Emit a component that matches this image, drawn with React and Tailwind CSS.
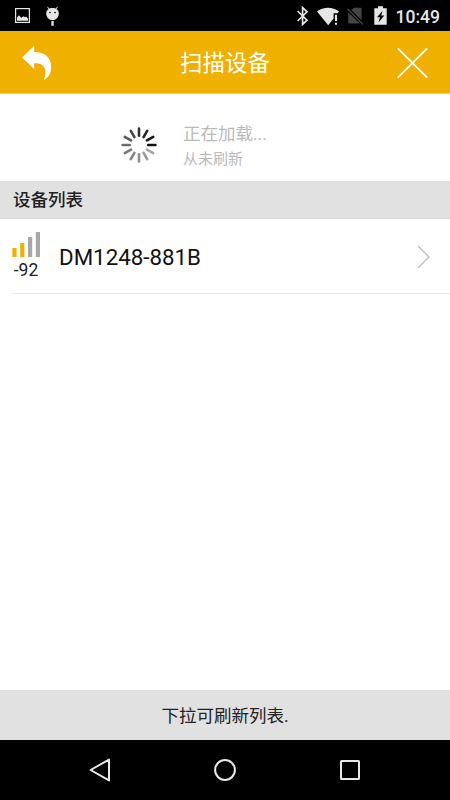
import React from "react";

/* Spinner spokes, clockwise from the top */
const SPOKES = [
  "#333333",
  "#262626",
  "#1a1a1a",
  "#101010",
  "#a8a8a8",
  "#999999",
  "#8f8f8f",
  "#858585",
  "#7a7a7a",
  "#6c6c6c",
  "#5c5c5c",
  "#484848",
];

const devices = [{ name: "DM1248-881B", rssi: -92, level: 2 }];

const Spinner = () => (
  <svg className="w-9 h-9" viewBox="-18 -18 36 36">
    {SPOKES.map((color, i) => (
      <line
        key={i}
        x1="0"
        y1="-9.2"
        x2="0"
        y2="-16.4"
        stroke={color}
        strokeWidth="2.6"
        strokeLinecap="round"
        transform={`rotate(${i * 30})`}
      />
    ))}
  </svg>
);

const Signal = ({ level }) => (
  <svg className="w-7 h-[25px]" viewBox="0 0 28 25">
    {[9, 14, 20, 25].map((h, i) => (
      <rect
        key={h}
        x={0.4 + i * 7.8}
        y={25 - h}
        width="4.2"
        height={h}
        fill={i < level ? "#efb000" : "#a8a8a8"}
      />
    ))}
  </svg>
);

const StatusBar = () => (
  <div className="h-[31px] shrink-0 bg-black text-[#e6e6e6] flex items-center justify-between pl-[15px] pr-[10px]">
    <div className="flex items-center gap-[16px]">
      <svg className="w-[15px] h-[15px]" viewBox="0 0 15 15">
        <rect x="0.6" y="0.6" width="13.8" height="13.8" fill="none" stroke="currentColor" strokeWidth="1.2" />
        <path d="M2 12.7V9.6L4 7.3L6.2 9.8L8.5 8.3L10 9.2L11 8.4L13 10.5V12.7Z" fill="currentColor" />
      </svg>
      <svg className="w-[13px] h-[20px]" viewBox="0 0 13 20">
        <path d="M1.5 0.8L3.4 3.5M11.5 0.8L9.6 3.5" stroke="currentColor" strokeWidth="1" />
        <path d="M0.2 7.5C0.2 4 3 2.1 6.5 2.1S12.8 4 12.8 7.5C12.8 11 10 14.2 6.5 14.2S0.2 11 0.2 7.5Z" fill="currentColor" />
        <circle cx="4" cy="6.6" r="0.8" fill="#000" />
        <circle cx="9" cy="6.6" r="0.8" fill="#000" />
        <rect x="5.4" y="15" width="2.3" height="4.8" fill="currentColor" />
      </svg>
    </div>
    <div className="flex items-center">
      <svg className="w-[12px] h-[20px] mr-[8px]" viewBox="0 0 12 20">
        <path d="M0.6 5L10 14.2L5.6 18.4V1.6L10 5.8L0.6 15" fill="none" stroke="currentColor" strokeWidth="1.7" />
      </svg>
      <svg className="w-[23px] h-[20px] mr-[7px]" viewBox="0 0 23 20">
        <path d="M0 5.4C6.5 0.4 15.5 0.4 22 5.4L20.6 7.2H16.6V12.5L11.2 19.2Z" fill="currentColor" />
        <path d="M18 8.8H20V15H18ZM18 16.8H20V18.8H18Z" fill="currentColor" />
      </svg>
      <svg className="w-[17px] h-[18px] mr-[10px]" viewBox="0 0 17 18">
        <path d="M4.2 3L7 0.7H13.5Q14.6 0.7 14.6 1.8V13.2L4.2 3ZM1.2 5.2L12.8 16.6H2.4Q1.2 16.6 1.2 15.4Z" fill="#454545" />
        <path d="M0.4 1.8L15.8 17.2" stroke="#454545" strokeWidth="1.3" />
      </svg>
      <svg className="w-[13px] h-[19px] mr-[9px]" viewBox="0 0 13 19">
        <path d="M4 0.3H9V2.2H12.7V18.7H0.3V2.2H4Z" fill="currentColor" />
        <path d="M8.6 4.7L3 11.3H6L4.5 16.6L10.3 9.6H7.2Z" fill="#000" />
      </svg>
      <span className="text-[17.5px] leading-[20px] font-medium pt-[2px]">10:49</span>
    </div>
  </div>
);

const Header = () => (
  <header className="h-[63px] shrink-0 bg-[#efb000] border-b border-[#f6cf62] text-white flex items-center justify-between pl-[22px] pr-[21px]">
    <svg className="w-[30px] h-[36px] mt-px" viewBox="0 0 30 36">
      <path d="M0 12.5L12.2 0.8V7.1C23 7.1 29.2 13 29.2 22C29.2 28.5 26 33 21.6 35.2C24.5 29 25.8 18 12.2 17.9V24Z" fill="currentColor" />
    </svg>
    <h1 className="ml-px pt-px text-[22.5px] leading-[30px] font-normal">扫描设备</h1>
    <svg className="w-[32px] h-[32px] mt-px" viewBox="0 0 32 32">
      <path d="M0.8 1.3L30.2 30.7M30.2 1.3L0.8 30.7" stroke="currentColor" strokeWidth="1.8" />
    </svg>
  </header>
);

const DeviceRow = ({ device }) => (
  <li className="ml-[12px] h-[75px] border-b border-[#ebebeb] flex items-center pr-[20px]">
    <div className="w-[28px] flex flex-col items-center">
      <Signal level={device.level} />
      <span className="pt-[2px] -mb-px text-[17.5px] leading-[22px] text-[#222222] whitespace-nowrap">{device.rssi}</span>
    </div>
    <span className="ml-[19px] pt-px flex-1 text-[22.3px] leading-[28px] text-[#111111]">{device.name}</span>
    <svg className="w-[13px] h-[24px] mt-[2px]" viewBox="0 0 13 24">
      <path d="M1 1L12 12L1 23" fill="none" stroke="#bdbdbd" strokeWidth="1.4" />
    </svg>
  </li>
);

const NavBar = () => (
  <nav className="h-[60px] shrink-0 bg-black text-[#e8e8e8] flex items-center justify-between pl-[89px] pr-[90px]">
    <svg className="w-[22px] h-[24px]" viewBox="0 0 22 24">
      <path d="M1.6 12L20 1.6V22.4Z" fill="none" stroke="currentColor" strokeWidth="2" strokeLinejoin="round" />
    </svg>
    <svg className="w-[22px] h-[22px] mr-[2px]" viewBox="0 0 22 22">
      <circle cx="11" cy="11" r="9.9" fill="none" stroke="currentColor" strokeWidth="2" />
    </svg>
    <svg className="w-[20px] h-[20px]" viewBox="0 0 20 20">
      <rect x="1" y="1" width="18" height="18" rx="0.6" fill="none" stroke="currentColor" strokeWidth="2" />
    </svg>
  </nav>
);

const App = () => {
  return (
    <div className="w-[450px] h-[800px] flex flex-col overflow-hidden bg-white font-[Roboto,'Noto_Sans_CJK_SC',sans-serif]">
      <StatusBar />
      <Header />

      {/* PULL TO REFRESH */}
      <div className="h-[87px] shrink-0 flex items-center pt-[15px] pl-[121px]">
        <Spinner />
        <div className="ml-[26px] pt-[2px] text-[#bababa]">
          <p className="text-[17.5px] leading-[26px]">正在加载...</p>
          <p className="text-[15px] leading-[25px]">从未刷新</p>
        </div>
      </div>

      {/* DEVICE LIST */}
      <h2 className="h-[38px] shrink-0 bg-[#e1e1e1] border-b border-[#d6d6d6] px-[13px] text-[17.5px] leading-[39px] font-medium text-[#222222]">
        设备列表
      </h2>
      <ul className="flex-1">
        {devices.map((device) => (
          <DeviceRow key={device.name} device={device} />
        ))}
      </ul>

      <footer className="h-[50px] shrink-0 bg-[#e1e1e1] text-center text-[17.5px] leading-[52px] text-[#222222]">
        下拉可刷新列表.
      </footer>
      <NavBar />
    </div>
  );
};

export default App;
